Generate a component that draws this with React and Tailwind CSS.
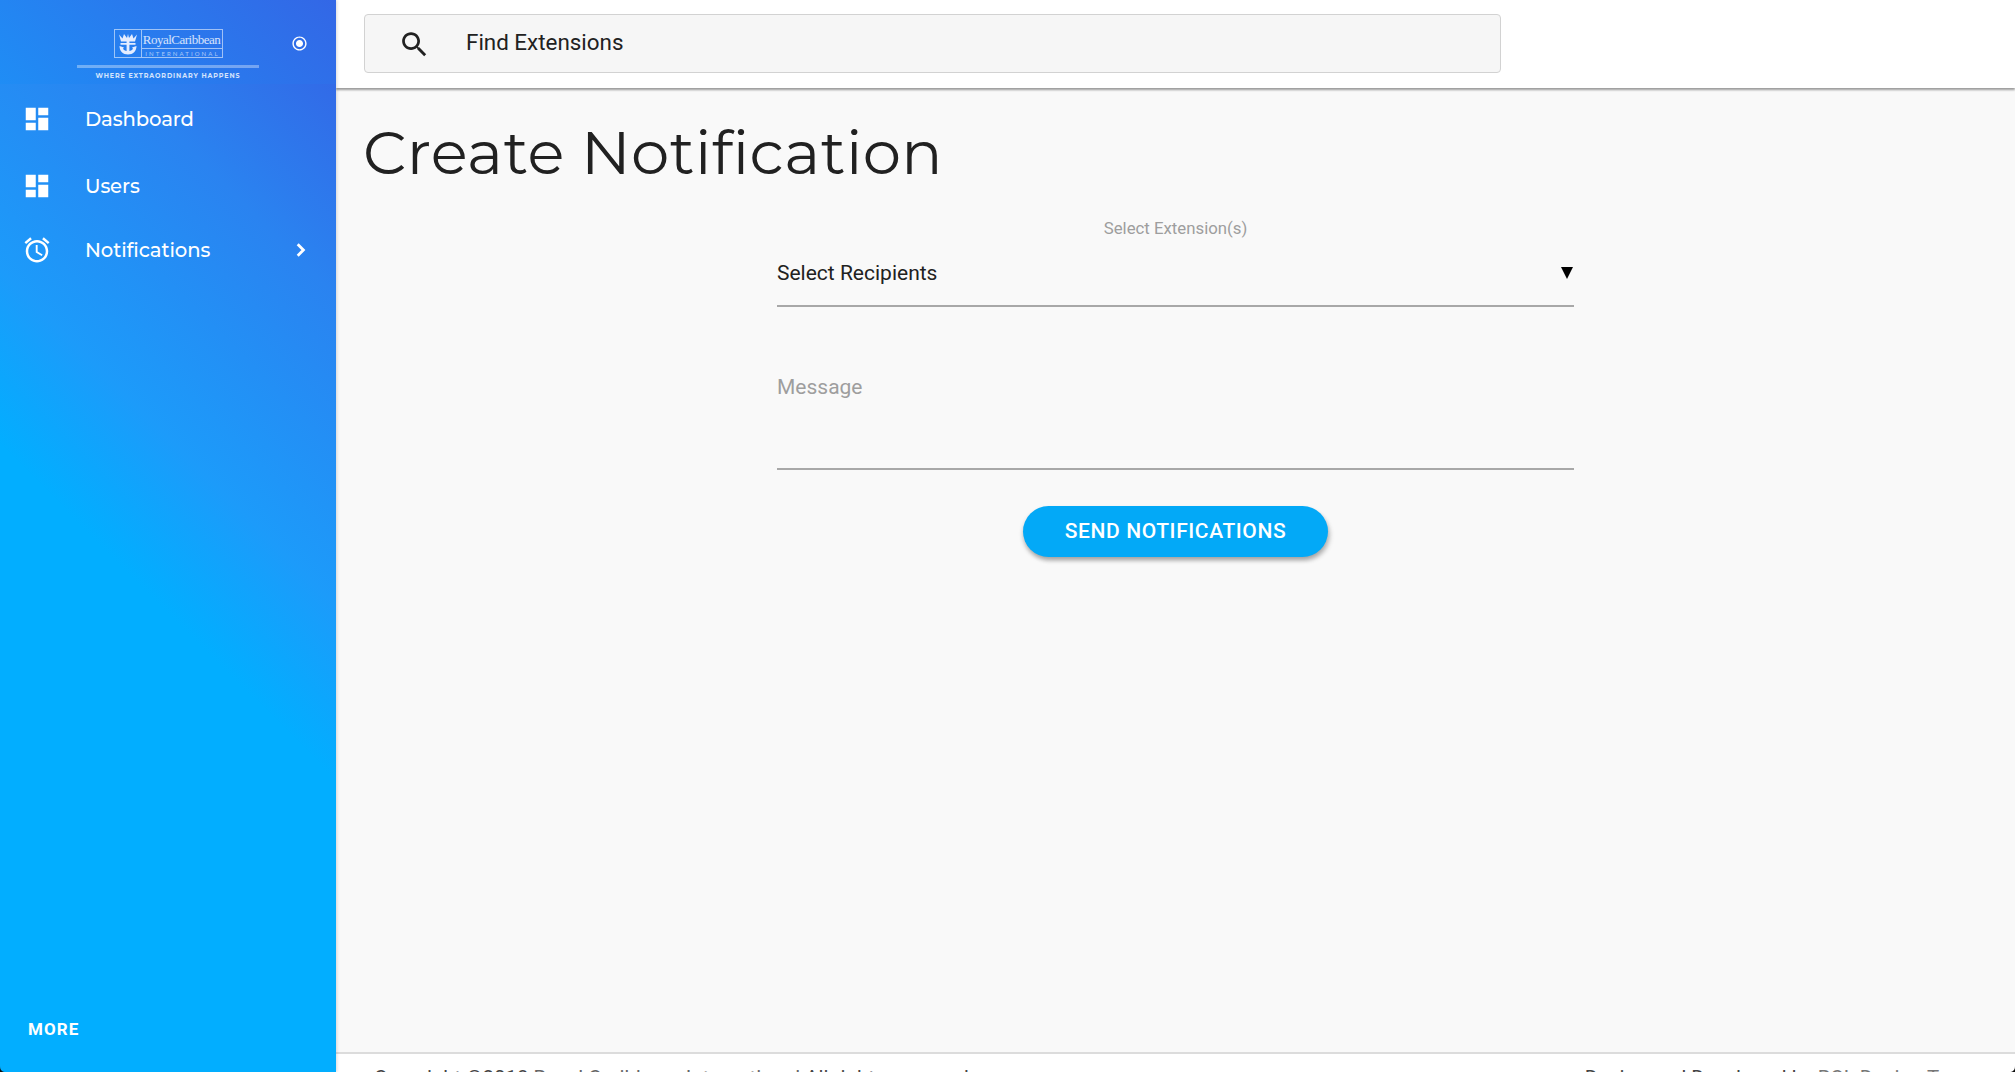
import React from "react";

const navItems = [
  { label: "Dashboard", icon: "dashboard", row: "h-[68px]" },
  { label: "Users", icon: "dashboard", row: "h-[66px]" },
  { label: "Notifications", icon: "alarm", row: "h-[62px]", chevron: true },
];

const paths = {
  dashboard: "M3 13h8V3H3v10zm0 8h8v-6H3v6zm10 0h8V11h-8v10zm0-18v6h8V3h-8z",
  alarm:
    "M22 5.72l-4.6-3.86-1.29 1.53 4.6 3.86L22 5.72zM7.88 3.39L6.6 1.86 2 5.71l1.29 1.53 4.59-3.85zM12.5 8H11v6l4.75 2.85.75-1.23-4-2.37V8zM12 4c-4.97 0-9 4.03-9 9s4.02 9 9 9c4.97 0 9-4.03 9-9s-4.03-9-9-9zm0 16c-3.87 0-7-3.13-7-7s3.13-7 7-7 7 3.13 7 7-3.13 7-7 7z",
  radio:
    "M12 7c-2.76 0-5 2.24-5 5s2.24 5 5 5 5-2.24 5-5-2.24-5-5-5zm0-5C6.48 2 2 6.48 2 12s4.48 10 10 10 10-4.48 10-10S17.52 2 12 2zm0 18c-4.42 0-8-3.58-8-8s3.58-8 8-8 8 3.58 8 8-3.58 8-8 8z",
  search:
    "M15.5 14h-.79l-.28-.27C15.41 12.59 16 11.11 16 9.5 16 5.91 13.09 3 9.5 3S3 5.91 3 9.5 5.91 16 9.5 16c1.61 0 3.09-.59 4.23-1.57l.27.28v.79l5 4.99L20.49 19l-4.99-5zm-6 0C7.01 14 5 11.99 5 9.5S7.01 5 9.5 5 14 7.01 14 9.5 11.99 14 9.5 14z",
};

function Icon({ name, className }) {
  return (
    <svg viewBox="0 0 24 24" fill="currentColor" className={className}>
      <path d={paths[name]} />
    </svg>
  );
}

function Logo() {
  return (
    <div className="ml-[77px] mt-[29px] flex w-[182px] flex-col items-center text-white/80">
      <div className="flex h-[29px] w-[109px] border border-white/55">
        <div className="flex w-[27px] items-center justify-center border-r border-white/55">
          <svg viewBox="0 0 20 22" className="h-[22px] w-[20px]" fill="#e4edff">
            <path d="M1 1.500l3.500 4L6 1l3 4 1-4 1 4 3-4 1.500 4.500 3.500-4L17 8.500H3z" />
            <path d="M8.600 8h2.800v10H8.600zM2.500 10h15v1.800h-15z" />
            <path d="M1.500 13l4.500 1.500-1 1.200c.8 1.600 2.600 2.300 5 2.300s4.200-.7 5-2.300l-1-1.200 4.500-1.500c0 5-3.500 8.500-8.500 8.500S1.500 18 1.500 13z" />
          </svg>
        </div>
        <div className="flex flex-1 flex-col items-center">
          <div className="h-[19px] w-full whitespace-nowrap border-b border-white/55 text-center font-['Liberation_Serif'] text-[13px] leading-[19px] tracking-[-0.5px]">
            RoyalCaribbean
          </div>
          <div className="whitespace-nowrap pl-[2px] font-['Lato'] text-[6px] leading-[9px] tracking-[2.1px] text-white/60">
            INTERNATIONAL
          </div>
        </div>
      </div>
      <div className="mt-[7px] h-[3px] w-full bg-white/35" />
      <div className="mt-[4px] whitespace-nowrap font-['Montserrat','Lato'] text-[6.4px] font-bold leading-[9px] tracking-[0.9px] text-white/80">
        WHERE EXTRAORDINARY HAPPENS
      </div>
    </div>
  );
}

function Sidebar() {
  return (
    <aside className="relative z-20 flex h-full w-[336px] shrink-0 flex-col bg-[linear-gradient(45deg,#02aeff_44.5%,#1c9bfa_57%,#2a83f0_79%,#3367e6_96%)] text-white shadow-[1px_0_3px_rgba(0,0,0,0.15)]">
      <div className="flex h-[84px] items-start bg-[linear-gradient(45deg,#1f8df5,#3367e6)]">
        <Logo />
        <Icon name="radio" className="ml-[32px] mt-[35px] h-[17px] w-[17px]" />
      </div>
      <nav className="flex flex-col pt-[1px]">
        {navItems.map((item) => (
          <a key={item.label} className={`flex items-center pl-[22px] ${item.row}`}>
            <Icon name={item.icon} className="h-[30px] w-[30px]" />
            <span className="ml-[33px] flex-1 font-['Montserrat','Inter'] text-[19.6px] font-medium leading-[30px] tracking-[-0.1px]">
              {item.label}
            </span>
            {item.chevron && (
              <svg viewBox="0 0 10 14" className="mr-[30px] h-[14px] w-[10px]" fill="none" stroke="white" strokeWidth="2.8">
                <path d="M1.700 1.300L7.400 7l-5.700 5.700" />
              </svg>
            )}
          </a>
        ))}
      </nav>
      <div className="mb-[32px] mt-auto pl-[28px] text-[17px] font-bold leading-[22px] tracking-[1.1px]">MORE</div>
      <svg viewBox="0 0 6 6" className="absolute bottom-0 left-0 h-[6px] w-[6px]">
        <path d="M0 0c0 4 2 6 6 6H0z" fill="#101010" />
      </svg>
    </aside>
  );
}

function Header() {
  return (
    <header className="relative z-10 h-[88px] shrink-0 bg-white pl-[28px] pt-[14px] shadow-[0_2px_2px_rgba(0,0,0,0.38)]">
      <div className="flex h-[59px] w-[1137px] items-center rounded-[4px] border border-[#d2d2d2] bg-[#f6f6f6] pl-[33px] text-[#212121]">
        <Icon name="search" className="mt-[2px] h-[33px] w-[33px]" />
        <span className="ml-[35px] mt-[-3px] text-[22.4px] leading-[30px]">Find Extensions</span>
      </div>
    </header>
  );
}

function Footer() {
  return (
    <footer className="relative flex h-[20px] shrink-0 justify-between overflow-hidden border-t-2 border-[#dcdcdc] bg-white pl-[38px] pr-[37px] pt-[11px] text-[20.45px] leading-[26px] text-[#444]">
      <span className="whitespace-nowrap">
        Copyright ©2018 <a className="text-[#666]">Royal Caribbean International</a> All rights reserved.
      </span>
      <span className="whitespace-nowrap">
        Design and Developed by <a className="text-[#777]">RCL Design Team</a>
      </span>
      <svg viewBox="0 0 6 6" className="absolute bottom-0 right-0 h-[6px] w-[6px]">
        <path d="M6 0c0 4-2 6-6 6h6z" fill="#101010" />
      </svg>
    </footer>
  );
}

export default function App() {
  return (
    <div className="flex h-[1072px] w-[2015px] overflow-hidden bg-[#f9f9f9] font-['Roboto',sans-serif]">
      <Sidebar />
      <div className="flex min-w-0 flex-1 flex-col">
        <Header />
        <main className="flex flex-1 flex-col pl-[27px]">
          <h1 className="mt-[24px] font-['Montserrat','Inter'] text-[61px] font-normal leading-[80px] tracking-[0.4px] text-[#212121]">
            Create Notification
          </h1>
          <form className="ml-[414px] mt-[25px] flex w-[797px] flex-col items-center">
            <label className="text-[16.8px] leading-[22px] text-[#9e9e9e]">Select Extension(s)</label>
            <div className="flex h-[68px] w-full items-center justify-between border-b-2 border-[#a8a8a8] pt-[2px] text-[21px] leading-[28px] text-[#212121]">
              <span>Select Recipients</span>
              <svg viewBox="0 0 12 12" className="mr-[1px] h-[12px] w-[12px]">
                <path d="M0 0h12L6 12z" fill="#000" />
              </svg>
            </div>
            <div className="h-[163px] w-full border-b-2 border-[#a8a8a8] pt-[66px] text-[21px] leading-[28px] text-[#9e9e9e]">
              Message
            </div>
            <button
              type="button"
              className="mt-[36px] h-[51px] w-[305px] rounded-full bg-[#03a9f7] text-[21px] font-medium leading-[51px] tracking-[0.6px] text-white shadow-[0_3px_4px_rgba(0,0,0,0.25),3px_4px_4px_rgba(0,0,0,0.12)]"
            >
              SEND NOTIFICATIONS
            </button>
          </form>
        </main>
        <Footer />
      </div>
    </div>
  );
}
